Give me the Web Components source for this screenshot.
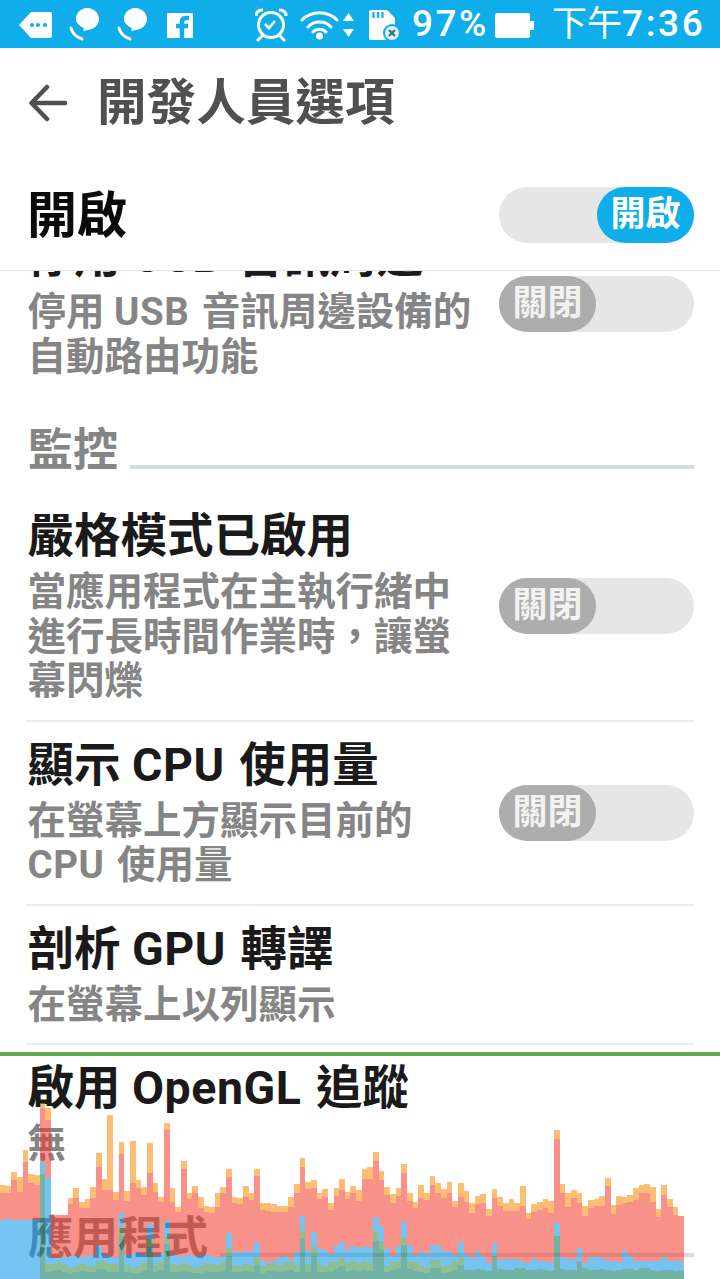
<!DOCTYPE html>
<html lang="zh-Hant">
<head>
<meta charset="utf-8">
<title>開發人員選項</title>
<style>
  html, body { margin: 0; padding: 0; background: #fff; }
  body { font-family: Roboto, "Noto Sans CJK TC", sans-serif; }
</style>
</head>
<body>

<settings-page>
  <status-bar slot="status"></status-bar>
  <app-bar slot="header">開發人員選項</app-bar>
  <master-row slot="master">開啟</master-row>

  <setting-row state="off">
    <span slot="title">停用 <en-word>USB</en-word> 音訊周邊</span>
    停用 <en-word>USB</en-word> 音訊周邊設備的<br>自動路由功能
  </setting-row>

  <section-head>監控</section-head>

  <setting-row state="off" divider>
    <span slot="title">嚴格模式已啟用</span>
    當應用程式在主執行緒中<br>進行長時間作業時，讓螢<br>幕閃爍
  </setting-row>
  <setting-row state="off" divider>
    <span slot="title">顯示 <en-word>CPU</en-word> 使用量</span>
    在螢幕上方顯示目前的<br><en-word>CPU</en-word> 使用量
  </setting-row>
  <setting-row divider>
    <span slot="title">剖析 <en-word>GPU</en-word> 轉譯</span>
    在螢幕上以列顯示
  </setting-row>
  <setting-row>
    <span slot="title">啟用 <en-word>OpenGL</en-word> 追蹤</span>
    無
  </setting-row>

  <section-head>應用程式</section-head>

  <gpu-chart slot="overlay"></gpu-chart>
</settings-page>

<script>
const FONT = `Roboto, "Noto Sans CJK TC", sans-serif`

class SettingsPage extends HTMLElement {
    constructor() {
        super()
        this.attachShadow({ mode: "open" }).innerHTML = `
        <style>
            :host {
                display: flex;
                flex-direction: column;
                position: relative;
                width: 720px;
                height: 1279px;
                overflow: hidden;
                background: #fff;
                font-family: ${FONT};
            }
            .list {
                flex: 1;
                min-height: 0;
                overflow: hidden;
            }
            /* list is scrolled, first row sits partly under the master switch */
            .inner { margin-top: -58px; }
        </style>
        <slot name="status"></slot>
        <slot name="header"></slot>
        <slot name="master"></slot>
        <div class="list"><div class="inner"><slot></slot></div></div>
        <slot name="overlay"></slot>
        `
    }
}

// latin runs in the device font sit wider than Roboto
class EnWord extends HTMLElement {
    constructor() {
        super()
        this.attachShadow({ mode: "open" }).innerHTML = `
        <style>
            :host {
                letter-spacing: .5px;
                margin-right: 2.500px;
            }
        </style>
        <slot></slot>
        `
    }
}

class StatusBar extends HTMLElement {
    constructor() {
        super()
        this.attachShadow({ mode: "open" }).innerHTML = `
        <style>
            :host {
                display: flex;
                align-items: center;
                flex: none;
                height: 48px;
                background: #0faeea;
                color: #fff;
                font-family: ${FONT};
            }
            svg { display: block; flex: none; }
            .pct {
                margin-left: 10px;
                width: 77px;
                font-size: 37px;
                font-weight: 500;
                letter-spacing: 2.5px;
                line-height: 48px;
                white-space: nowrap;
            }
            .battery { margin-left: 6px; }
            .time {
                margin-left: 18px;
                font-size: 35px;
                line-height: 48px;
                white-space: nowrap;
            }
            .time b { font-weight: 500; font-size: 37px; letter-spacing: 2.6px; }
        </style>
        <svg width="194" height="48" viewBox="0 0 194 48" fill="#fff">
            <path d="M19 25 L31 12 H50 a2 2 0 0 1 2 2 V36 a2 2 0 0 1 -2 2 H31 Z"/>
            <g fill="#0faeea"><circle cx="32" cy="25" r="2"/><circle cx="38" cy="25" r="2"/><circle cx="45" cy="25" r="2"/></g>
            <g>
                <path d="M87 8 c7 0 12 5 12 11 c0 6 -5 10 -11 11 l-5 1 l1 -3 c-5 -2 -8 -5 -8 -9 c0 -6 5 -11 11 -11 Z"/>
                <path d="M71 28 q2 8 11 11" fill="none" stroke="#fff" stroke-width="3" stroke-linecap="round"/>
            </g>
            <g>
                <path d="M135 8 c7 0 12 5 12 11 c0 6 -5 10 -11 11 l-5 1 l1 -3 c-5 -2 -8 -5 -8 -9 c0 -6 5 -11 11 -11 Z"/>
                <path d="M119 28 q2 8 11 11" fill="none" stroke="#fff" stroke-width="3" stroke-linecap="round"/>
            </g>
            <rect x="167" y="13" width="26" height="25" rx="1"/>
            <path d="M189 18 h-3 q-4 0 -4 4 V38 M176 26 h12" fill="none" stroke="#0faeea" stroke-width="4.500"/>
        </svg>
        <svg style="margin-left:61px" width="147" height="48" viewBox="255 0 147 48" fill="none" stroke="#fff">
            <circle cx="271" cy="25" r="12.500" stroke-width="3"/>
            <path d="M265 24 l4 4 l6 -7" stroke-width="2.600"/>
            <path d="M256 16 q0 -6 7 -6 M286 16 q0 -6 -7 -6" stroke-width="3"/>
            <path d="M262 36 l-4 4 M280 36 l4 4" stroke-width="3" stroke-linecap="round"/>
            <path d="M302 20 A25 25 0 0 1 337 20 M308 27 A16 16 0 0 1 331 27 M313 32 A9 9 0 0 1 326 32" stroke-width="3" stroke-linecap="round"/>
            <circle cx="319.500" cy="36" r="3.500" fill="#fff" stroke="none"/>
            <path d="M348.500 13 L354 21 H343 Z M343 29 H354 L348.500 37 Z" fill="#fff" stroke="none"/>
            <path d="M369 12 a2 2 0 0 1 2 -2 H387 L395 18 V38 a2 2 0 0 1 -2 2 H371 a2 2 0 0 1 -2 -2 Z" fill="#fff" stroke="none"/>
            <path d="M373.500 12 v6 M378 12 v6 M382.500 12 v6" stroke="#0faeea" stroke-width="2.200"/>
            <circle cx="392" cy="33" r="8" fill="#dff3fb" stroke="#0faeea" stroke-width="2"/>
            <path d="M389 30 l6 6 M395 30 l-6 6" stroke="#2b6f93" stroke-width="2.200"/>
        </svg>
        <span class="pct">97%</span>
        <svg class="battery" width="39" height="48" viewBox="495 0 39 48" fill="#fff">
            <path d="M495 15 a2 2 0 0 1 2 -2 H528 a2 2 0 0 1 2 2 V21 H534 V30 H530 V36 a2 2 0 0 1 -2 2 H497 a2 2 0 0 1 -2 -2 Z"/>
        </svg>
        <span class="time">下午<b>7:36</b></span>
        `
    }
}

class AppBar extends HTMLElement {
    constructor() {
        super()
        this.attachShadow({ mode: "open" }).innerHTML = `
        <style>
            :host {
                display: flex;
                align-items: center;
                flex: none;
                height: 110px;
                box-sizing: border-box;
                padding-left: 28px;
                gap: 30px;
                background: #fff;
                color: #505050;
            }
            svg { display: block; flex: none; }
            .title {
                font-size: 49.600px;
                font-weight: 700;
                line-height: 110px;
                white-space: nowrap;
            }
        </style>
        <svg width="39" height="40" viewBox="0 0 39 40" fill="none" stroke="#505050" stroke-width="4.500" stroke-linecap="round" stroke-linejoin="round">
            <path d="M37 20 H4 M19 4 L3.500 20 L19 36"/>
        </svg>
        <div class="title"><slot></slot></div>
        `
    }
}

class ToggleSwitch extends HTMLElement {
    static get observedAttributes() {
        return [`state`]
    }

    constructor() {
        super()
        this.attachShadow({ mode: "open" }).innerHTML = `
        <style>
            :host {
                display: flex;
                flex: none;
                width: 195px;
                height: 56px;
                border-radius: 28px;
                background: #e6e6e6;
            }
            :host([state="on"]) { justify-content: flex-end; }
            .thumb {
                display: flex;
                align-items: center;
                justify-content: center;
                width: 97px;
                height: 56px;
                border-radius: 28px;
                background: #adadad;
                color: #f2f2f2;
                font-size: 35px;
                font-weight: 700;
                line-height: 56px;
                white-space: nowrap;
            }
            :host([state="on"]) .thumb { background: #0faeea; color: #fff; }
        </style>
        <div class="thumb"></div>
        `
        this.thumb = this.shadowRoot.querySelector('.thumb')
    }

    attributeChangedCallback(name, oldValue, newValue) {
        this.thumb.textContent = newValue == 'on' ? '開啟' : '關閉'
    }
}

class MasterRow extends HTMLElement {
    constructor() {
        super()
        this.attachShadow({ mode: "open" }).innerHTML = `
        <style>
            :host {
                display: flex;
                align-items: center;
                justify-content: space-between;
                flex: none;
                height: 113px;
                box-sizing: border-box;
                padding: 2px 26px 0 27px;
                background: #fff;
                border-bottom: 1px solid #e2e2e2;
                color: #0a0a0a;
                font-size: 50px;
                font-weight: 700;
            }
            .label { line-height: 60px; margin-top: 2px; }
        </style>
        <div class="label"><slot></slot></div>
        <toggle-switch state="on"></toggle-switch>
        `
    }
}

class SettingRow extends HTMLElement {
    static get observedAttributes() {
        return [`state`]
    }

    constructor() {
        super()
        this.attachShadow({ mode: "open" }).innerHTML = `
        <style>
            :host {
                display: block;
                margin: 0 26px;
            }
            :host([divider]) { border-bottom: 2px solid #ececec; }
            .row {
                display: flex;
                align-items: center;
                justify-content: space-between;
                padding: 13px 0 16px 1.500px;
            }
            .title {
                margin-bottom: 4px;
                color: #1a1a1a;
                font-size: 46.500px;
                font-weight: 700;
                line-height: 60px;
                white-space: nowrap;
            }
            .sub {
                color: #858585;
                font-size: 38.500px;
                font-weight: 700;
                line-height: 44.500px;
                white-space: nowrap;
            }
            toggle-switch { margin-top: 3px; }
        </style>
        <div class="row">
            <div>
                <div class="title"><slot name="title"></slot></div>
                <div class="sub"><slot></slot></div>
            </div>
        </div>
        `
    }

    attributeChangedCallback(name, oldValue, newValue) {
        const toggle = document.createElement('toggle-switch')
        toggle.setAttribute('state', newValue)
        this.shadowRoot.querySelector('.row').append(toggle)
    }
}

class SectionHead extends HTMLElement {
    constructor() {
        super()
        this.attachShadow({ mode: "open" }).innerHTML = `
        <style>
            :host {
                display: flex;
                align-items: flex-end;
                gap: 12px;
                margin: 0 26px 0 28px;
                padding-top: 31px;
                padding-bottom: 17px;
                color: #858585;
                font-size: 45px;
                font-weight: 700;
                line-height: 50px;
            }
            .rule {
                flex: 1;
                height: 4px;
                margin-bottom: 7px;
                background: #d5dcdc;
            }
        </style>
        <div><slot></slot></div>
        <div class="rule"></div>
        `
    }
}

// yellow top, red top per bar, read off the graph (3x crop coords from y=1040)
const BAR_TOPS = [
    [436,458],[438,458],[396,420],[412,455],[330,365],[402,430],[406,435],[190,205],[205,240],
    [525,525],[525,525],[525,525],[475,492],[444,475],[485,505],[478,503],[442,475],[340,382],
    [418,450],[225,450],[455,480],[305,342],[452,482],[303,428],[420,445],[440,465],[308,400],
    [428,455],[470,487],[248,270],[445,485],[500,516],[364,386],[458,476],[437,458],[470,505],
    [498,515],[500,520],[460,500],[440,460],[388,410],[470,490],[474,492],[437,470],[460,480],
    [388,408],[490,510],[490,512],[492,515],[497,517],[497,517],[470,500],[433,458],[355,380],
    [425,448],[420,445],[458,478],[448,472],[490,510],[445,468],[418,450],[455,478],[437,460],
    [450,482],[387,417],[380,417],[335,363],[392,420],[442,465],[462,490],[445,467],[373,400],
    [458,482],[486,503],[435,473],[460,480],[407,435],[428,460],[447,475],[427,460],[482,500],
    [430,470],[452,485],[490,518],[468,492],[462,490],[506,527],[447,475],[472,498],[488,513],
    [477,512],[488,512],[437,498],[518,537],[493,517],[485,510],[476,505],[482,518],[270,297],
    [433,458],[460,500],[450,473],[460,490],[498,527],[480,503],[478,498],[468,497],[415,437],
    [495,523],[468,495],[472,490],[465,485],[445,480],[435,460],[433,460],[440,485],[508,532],
    [435,465],[478,500],[500,525],[528,528]
]

// blue top per bar (3x crop coords from y=1199)
const BLUE_TOPS = [
    62,60,62,64,62,64,64,-111,-64,
    178,178,175,172,170,174,172,168,140,168,172,176,42,168,165,160,168,75,170,165,65,168,
    172,170,168,172,170,168,172,178,170,102,
    158,158,160,155,128,185,188,185,175,172,180,158,50,155,100,148,152,165,140,130,152,142,
    146,142,146,55,80,150,172,140,68,140,172,158,165,138,138,155,158,168,
    128,165,178,155,172,192,132,182,180,180,180,190,192,180,185,190,190,72,175,180,180,148,
    192,175,175,178,185,185,188,152,170,185,185,185,185,185,175,187,187,187
]

class GpuChart extends HTMLElement {
    constructor() {
        super()
        this.attachShadow({ mode: "open" }).innerHTML = `
        <style>
            :host {
                position: absolute;
                left: 0;
                top: 1052px;
                width: 720px;
                height: 227px;
                pointer-events: none;
            }
            .line { height: 4px; background: #5fa84f; }
            svg { display: block; }
        </style>
        <div class="line"></div>
        <svg width="720" height="223" viewBox="0 1056 720 223" shape-rendering="crispEdges"></svg>
        `
        this.draw()
    }

    draw() {
        const ns = 'http://www.w3.org/2000/svg'
        const svg = this.shadowRoot.querySelector('svg')
        const barWidth = 684 / BAR_TOPS.length
        const rect = (i, top, bottom, color) => {
            if (bottom <= top) return
            const r = document.createElementNS(ns, 'rect')
            const x = Math.round(i * barWidth)
            r.setAttribute('x', x)
            r.setAttribute('width', Math.round((i + 1) * barWidth) - x)
            r.setAttribute('y', top)
            r.setAttribute('height', bottom - top)
            r.setAttribute('fill', color)
            svg.append(r)
        }

        BAR_TOPS.forEach(([yellow, red], i) => {
            const y = 1040 + yellow / 3
            const r = 1040 + red / 3
            const blueZ = BLUE_TOPS[i]
            const b = 1199 + blueZ / 3
            const wave = Math.sin(i * 1.7) * 6 + Math.sin(i * 0.6) * 5
            const spike = i > 8 && blueZ < 150

            let g = 1279, t = 1279
            if (i == 7) {
                g = t = 1199 + -76 / 3
            } else if (i > 7) {
                if (i < 82) {
                    g = 1199 + (spike ? blueZ + 45 : 196 + wave) / 3
                    t = 1199 + (spike ? blueZ + 70 : 218 + wave / 2) / 3
                } else {
                    t = 1199 + (spike ? blueZ + 38 : 212 + wave / 2) / 3
                    g = t
                }
            }

            rect(i, y, r, 'rgba(251,135,0,.55)')
            rect(i, r, b, 'rgba(242,55,42,.55)')
            rect(i, b, g, 'rgba(5,145,229,.55)')
            rect(i, g, t, 'rgba(47,136,62,.55)')
            rect(i, t, 1279, 'rgba(0,116,91,.55)')
        })
    }
}

customElements.define('settings-page', SettingsPage)
customElements.define('en-word', EnWord)
customElements.define('status-bar', StatusBar)
customElements.define('app-bar', AppBar)
customElements.define('toggle-switch', ToggleSwitch)
customElements.define('master-row', MasterRow)
customElements.define('setting-row', SettingRow)
customElements.define('section-head', SectionHead)
customElements.define('gpu-chart', GpuChart)
</script>
</body>
</html>
